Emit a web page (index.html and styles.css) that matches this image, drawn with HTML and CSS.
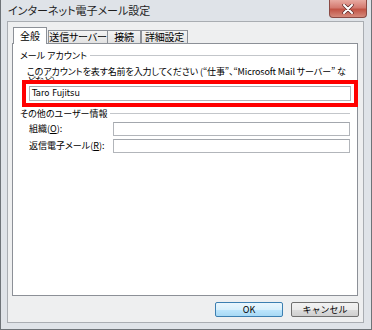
FILE: index.html
```html
<!DOCTYPE html>
<html lang="ja">
<head>
    <meta charset="UTF-8">
    <title>インターネット電子メール設定</title>
    <link rel="stylesheet" href="styles.css">
</head>
<body>
    <div class="window">
        <div class="titlebar">
            <span class="title">インターネット電子メール設定</span>
            <div class="close">
                <svg width="12" height="10" viewBox="0 0 12 10">
                    <path d="M2 1 L10 9 M10 1 L2 9" stroke="#5a2a2a" stroke-width="3.4" stroke-linecap="round"/>
                    <path d="M2 1 L10 9 M10 1 L2 9" stroke="#ffffff" stroke-width="2" stroke-linecap="round"/>
                </svg>
            </div>
        </div>
        <div class="client">
            <div class="tabs">
                <div class="tab active">全般</div>
                <div class="tab t-server">送信サーバー</div>
                <div class="tab t-conn">接続</div>
                <div class="tab t-adv">詳細設定</div>
            </div>
            <div class="panel">
                <div class="group-head first"><span>メール アカウント</span></div>
                <div class="hint">このアカウントを表す名前を入力してください (“仕事”、“Microsoft Mail サーバー” などなど)</div>
                <div class="highlight">
                    <div class="textbox name">Taro Fujitsu</div>
                </div>
                <div class="group-head"><span>その他のユーザー情報</span></div>
                <div class="row">
                    <label>組織(<u>O</u>):</label>
                    <div class="textbox"></div>
                </div>
                <div class="row">
                    <label>返信電子メール(<u>R</u>):</label>
                    <div class="textbox"></div>
                </div>
            </div>
            <div class="buttons">
                <button class="btn default">OK</button>
                <button class="btn">キャンセル</button>
            </div>
        </div>
    </div>
</body>
</html>
```

FILE: styles.css
```css
body {
    margin: 0;
    font-family: "Noto Sans CJK JP", "Liberation Sans", sans-serif;
    font-feature-settings: "palt";
    color: #000;
}
.window {
    width: 372px;
    height: 330px;
    box-sizing: border-box;
    padding: 0 7px 6px 6px;
    background: #dfe3e8;
    border: 1px solid #6e7378;
    border-top: none;
}
.titlebar {
    height: 21px;
    display: flex;
    justify-content: space-between;
    align-items: flex-start;
    margin-right: -3px;
}
.title {
    font-size: 11px;
    line-height: 21px;
    padding-left: 1px;
    color: #1e1e1e;
}
.close {
    width: 38px;
    height: 18px;
    box-sizing: border-box;
    border: 1px solid #8a4a44;
    border-top: none;
    border-radius: 0 0 4px 4px;
    background: linear-gradient(#e8aaa2, #d47a70 45%, #c25446 55%, #d58a7c);
    display: flex;
    align-items: center;
    justify-content: center;
}
.client {
    height: 302px;
    box-sizing: border-box;
    background: #eeeff0;
    border: 1px solid #a9adb2;
    padding: 5px 5px 0 4px;
}
.tabs {
    display: flex;
    align-items: flex-end;
    height: 16px;
    position: relative;
    z-index: 1;
}
.tab {
    box-sizing: border-box;
    height: 13px;
    font-size: 10px;
    line-height: 12px;
    text-align: center;
    white-space: nowrap;
    letter-spacing: -0.2px;
    border: 1px solid #8c9097;
    border-bottom: none;
    background: linear-gradient(#f4f4f4, #e2e2e2);
}
.tab.active {
    height: 17px;
    margin-bottom: -1px;
    margin-left: 1px;
    width: 34px;
    line-height: 15px;
    letter-spacing: 0;
    background: #fff;
}
.t-server { width: 60px; margin-left: 1px; }
.t-conn { width: 34px; margin-left: -1px; }
.t-adv { width: 47px; }
.panel {
    height: 253px;
    box-sizing: border-box;
    background: #fff;
    border: 1px solid #8c9097;
    padding: 0 7px 0 7px;
}
.group-head {
    display: flex;
    align-items: center;
    height: 11px;
    font-size: 9px;
    line-height: 11px;
    margin-top: 1px;
}
.group-head.first {
    margin-top: 6px;
}
.group-head::after {
    content: "";
    flex: 1;
    border-top: 1px solid #c3c6ca;
    margin-left: 3px;
}
.hint {
    font-size: 9px;
    line-height: 9px;
    height: 13px;
    overflow: hidden;
    margin: 6px 0 0 7px;
    letter-spacing: -0.1px;
}
.highlight {
    border: 4px solid #ff0000;
    padding: 2px 3px;
    margin: 0 -8px 0 2px;
}
.textbox {
    height: 14px;
    box-sizing: border-box;
    border: 1px solid #b2b5ba;
    border-top-color: #a3a7ad;
    background: #fff;
}
.textbox.name {
    height: 15px;
    font-family: "DejaVu Sans", sans-serif;
    font-size: 8.5px;
    line-height: 13px;
    padding-left: 2px;
}
.row {
    display: flex;
    align-items: center;
    margin: 3px 0 0 9px;
}
.row + .row {
    margin-top: 3px;
}
.row label {
    width: 84px;
    font-size: 9px;
    line-height: 14px;
}
.row .textbox {
    flex: 1;
}
.buttons {
    display: flex;
    justify-content: flex-end;
    gap: 8px;
    margin-top: 6px;
    margin-right: -1px;
}
.btn {
    width: 68px;
    height: 15px;
    padding: 0;
    font-family: inherit;
    font-size: 9px;
    line-height: 13px;
    border: 1px solid #707070;
    border-radius: 2px;
    background: linear-gradient(#f2f2f2, #ebebeb 50%, #dddddd 50%, #cfcfcf);
}
.btn.default {
    border-color: #3c7fb1;
    background: linear-gradient(#eaf6fd, #d9f0fc 50%, #bee6fd 50%, #a7d9f5);
}
```
